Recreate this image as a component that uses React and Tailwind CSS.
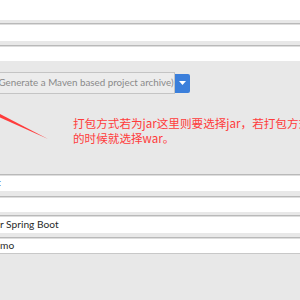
export default function App() {
  const field = 'border-t border-t-[#b9b9b9] shadow-[inset_0_1px_0_#dedede] bg-white'
  return (
    <div className="h-[300px] w-[300px] overflow-hidden bg-[#e8e8e8] font-['Lato',sans-serif] text-[10.2px]">
      <div className="h-[20px] bg-white" />
      <div className="h-[3px]" />
      <div className={`${field} h-[18px]`} />
      <div className="h-[4px]" />
      <div className={`${field} h-[16px]`} />
      <div className="h-[11px]" />

      <div className="flex h-[22px] items-center">
        <div className="ml-[-8px] flex h-[22px] w-[183px] items-center border border-[#c4c4c4] bg-[#ececec] pl-[3px] text-[9.8px] text-[#8a8a8a] leading-none whitespace-nowrap">
          (Generate a Maven based project archive)
        </div>
        <div className="flex h-[19px] w-[15px] items-center justify-center rounded-r-[2px] bg-[#3b7fdb]">
          <svg width="7" height="4" viewBox="0 0 7 4">
            <path d="M0 0h7L3.5 4z" fill="#fff" />
          </svg>
        </div>
      </div>

      <div className="relative h-[80px]">
        <svg className="absolute left-0 top-0" width="60" height="60" viewBox="0 0 60 60">
          <path d="M0 20L0 23.5L48 45Z" fill="#ff3c3c" />
        </svg>
        <div className="pl-[73px] pt-[22px] font-['Noto_Sans_CJK_SC',sans-serif] text-[11.6px] leading-[15px] text-[#ff3b3b] whitespace-nowrap">
          <div>打包方式若为jar这里则要选择jar，若打包方式为war</div>
          <div>的时候就选择war。</div>
        </div>
      </div>

      <div className={`${field} flex h-[17px] items-center overflow-hidden`}>
        <span className="ml-[-3px] text-[#1a3a8a]">t</span>
      </div>
      <div className="h-[5px]" />
      <div className={`${field} h-[16px]`} />
      <div className="h-[3px]" />
      <div className={`${field} flex h-[18px] items-center text-[#2a2a2a] leading-none`}>r Spring Boot</div>
      <div className="h-[4px]" />
      <div className={`${field} flex h-[16px] items-center text-[#2a2a2a] leading-none`}>mo</div>
      <div className="border-t border-t-[#c8c8c8]" />
    </div>
  )
}
